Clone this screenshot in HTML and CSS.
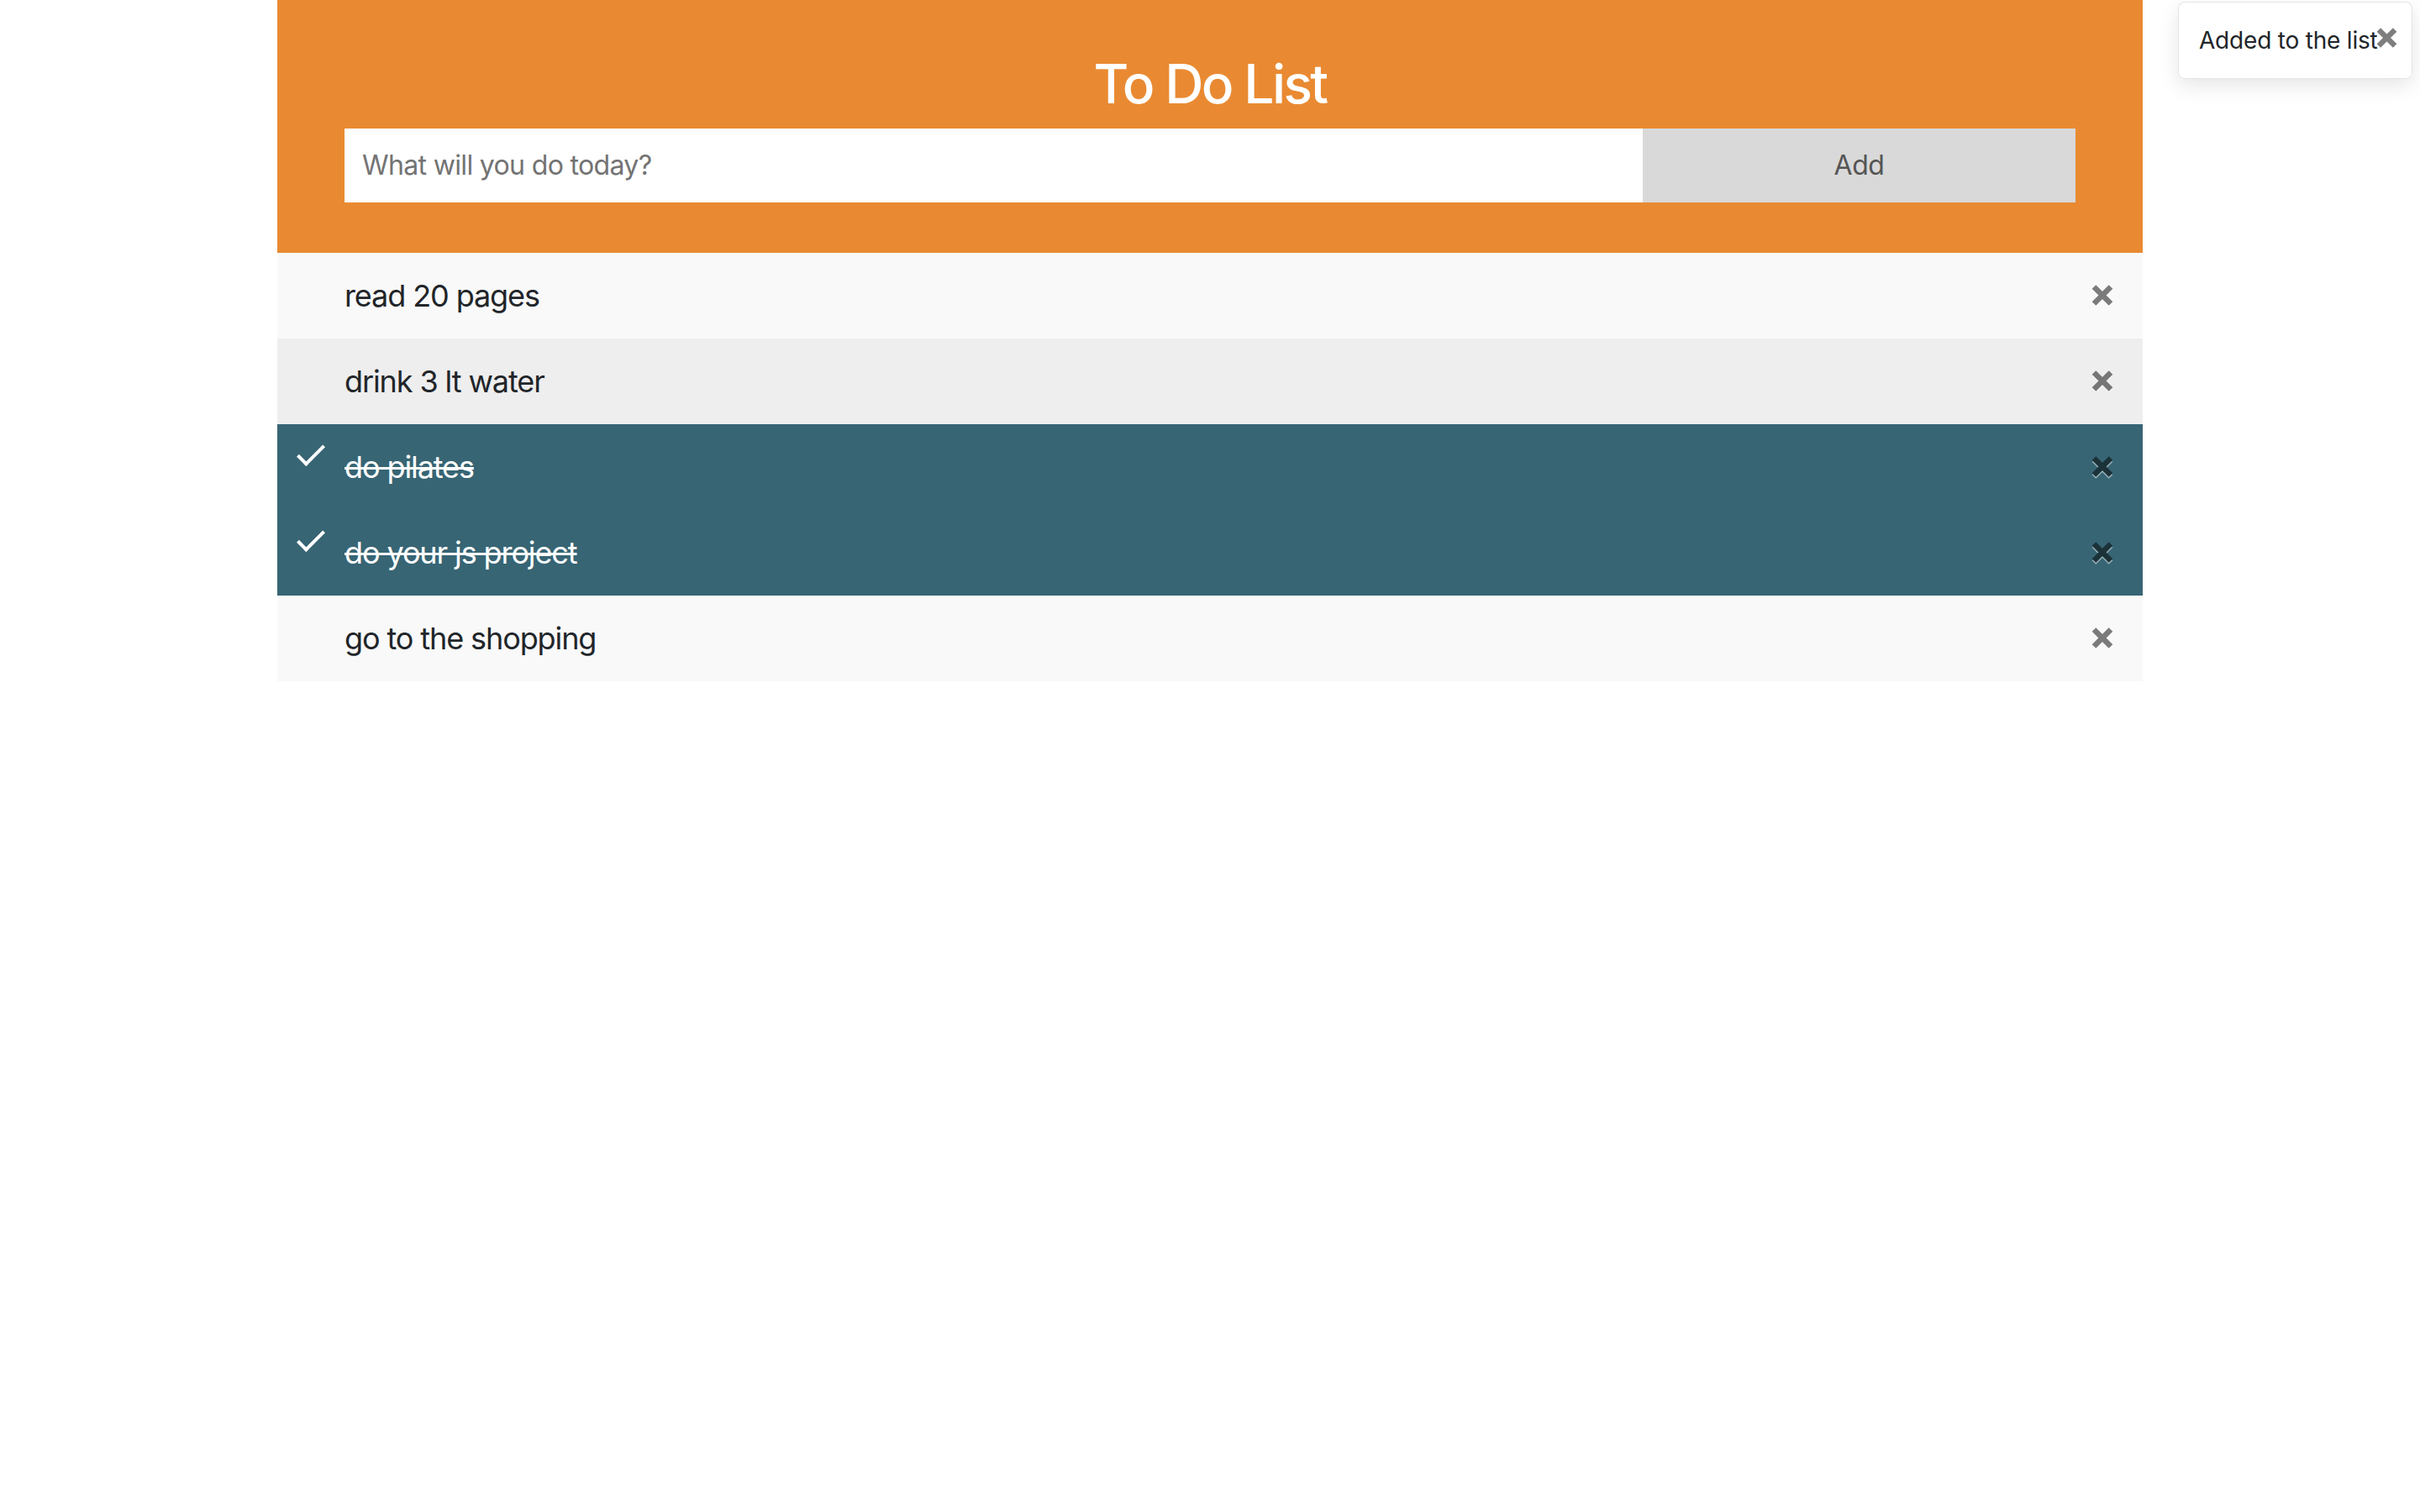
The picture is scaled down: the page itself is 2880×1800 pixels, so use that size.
FILE: index.html
```html
<!DOCTYPE html>
<html lang="en">
<head>
<meta charset="utf-8">
<title>To Do List</title>
<link rel="stylesheet" href="styles.css">
</head>
<body>
<div class="page">
  <main class="todo">
    <header class="header">
      <h2 class="title">To Do List</h2>
      <div class="add-row">
        <input class="task-input" type="text" placeholder="What will you do today?">
        <span class="add-btn">Add</span>
      </div>
    </header>
    <ul class="list">
      <li class="item">
        <span class="item-text">read 20 pages</span>
        <span class="close"><svg viewBox="0 0 26 25" width="26" height="25"><path d="M3 2.5 L23 22.5 M23 2.5 L3 22.5" stroke="#000" stroke-width="6.6" fill="none"/></svg></span>
      </li>
      <li class="item">
        <span class="item-text">drink 3 lt water</span>
        <span class="close"><svg viewBox="0 0 26 25" width="26" height="25"><path d="M3 2.5 L23 22.5 M23 2.5 L3 22.5" stroke="#000" stroke-width="6.6" fill="none"/></svg></span>
      </li>
      <li class="item checked">
        <span class="item-text">do pilates</span>
        <span class="close"><svg viewBox="0 0 26 25" width="26" height="25"><path d="M3 2.5 L23 22.5 M23 2.5 L3 22.5" stroke="#000" stroke-width="6.6" fill="none"/></svg></span>
      </li>
      <li class="item checked">
        <span class="item-text">do your js project</span>
        <span class="close"><svg viewBox="0 0 26 25" width="26" height="25"><path d="M3 2.5 L23 22.5 M23 2.5 L3 22.5" stroke="#000" stroke-width="6.6" fill="none"/></svg></span>
      </li>
      <li class="item">
        <span class="item-text">go to the shopping</span>
        <span class="close"><svg viewBox="0 0 26 25" width="26" height="25"><path d="M3 2.5 L23 22.5 M23 2.5 L3 22.5" stroke="#000" stroke-width="6.6" fill="none"/></svg></span>
      </li>
    </ul>
  </main>
  <div class="toast">
    <div class="toast-body">Added to the list</div>
    <span class="close toast-close"><svg viewBox="0 0 26 25" width="25" height="24"><path d="M3 2.5 L23 22.5 M23 2.5 L3 22.5" stroke="#000" stroke-width="6.6" fill="none"/></svg></span>
  </div>
</div>
</body>
</html>
```
FILE: styles.css
```css
* {
  box-sizing: border-box;
}

html, body {
  margin: 0;
  padding: 0;
  background: #ffffff;
}

body {
  font-family: Inter, "Noto Sans", "Liberation Sans", sans-serif;
  color: #212529;
  font-size: 32px;
  line-height: 1.5;
}

.page {
  position: relative;
  min-height: 1800px;
}

.todo {
  width: 2220px;
  margin: 0 auto;
}

.header {
  background: #e98a32;
  padding: 62px 80px 60px;
  text-align: center;
  color: #ffffff;
}

.title {
  margin: 0 0 14px;
  font-size: 64px;
  font-weight: 500;
  line-height: 1.2;
  letter-spacing: -2.6px;
}

.add-row {
  display: flex;
  height: 88px;
}

.task-input {
  flex: 0 0 75%;
  margin: 0;
  border: none;
  border-radius: 0;
  outline: none;
  padding: 0 21px;
  height: 88px;
  font-family: inherit;
  font-size: 32px;
  letter-spacing: -0.65px;
  color: #495057;
  background: #ffffff;
}

.task-input::placeholder {
  color: #737373;
  opacity: 1;
}

.add-btn {
  flex: 0 0 25%;
  display: flex;
  align-items: center;
  justify-content: center;
  background: #d9d9d9;
  color: #555555;
  font-size: 32px;
  letter-spacing: -0.4px;
}

.list {
  list-style: none;
  margin: 0;
  padding: 0;
}

.item {
  position: relative;
  display: flex;
  align-items: center;
  padding: 24px 35px 24px 80px;
  font-size: 36px;
  line-height: 54px;
  background: #eeeeee;
}

.item:nth-child(odd) {
  background: #f9f9f9;
}

.item.checked {
  background: #376574;
  color: #ffffff;
}

.item.checked .item-text {
  text-decoration: line-through;
  text-decoration-thickness: 3px;
}

.item.checked::before {
  content: "";
  position: absolute;
  top: 17px;
  left: 32px;
  width: 12px;
  height: 28px;
  border-style: solid;
  border-color: #ffffff;
  border-width: 0 4px 4px 0;
  transform: rotate(45deg);
}

.item-text {
  flex: 1 1 auto;
  letter-spacing: -1.1px;
}

.close {
  display: flex;
  opacity: 0.5;
  line-height: 0;
}

.close svg {
  display: block;
  filter: drop-shadow(0 2px 0 #ffffff);
}

.toast {
  position: absolute;
  top: 2px;
  right: 9px;
  width: 279px;
  background: rgba(255, 255, 255, 0.85);
  border: 1px solid rgba(0, 0, 0, 0.1);
  border-radius: 8px;
  box-shadow: 0 8px 24px rgba(0, 0, 0, 0.1);
  font-size: 28px;
  line-height: 42px;
  color: #212529;
}

.toast-body {
  padding: 24px 24px 24px 24px;
  white-space: nowrap;
  letter-spacing: -0.2px;
}

.toast-close {
  position: absolute;
  top: 30px;
  right: 17px;
}
```
